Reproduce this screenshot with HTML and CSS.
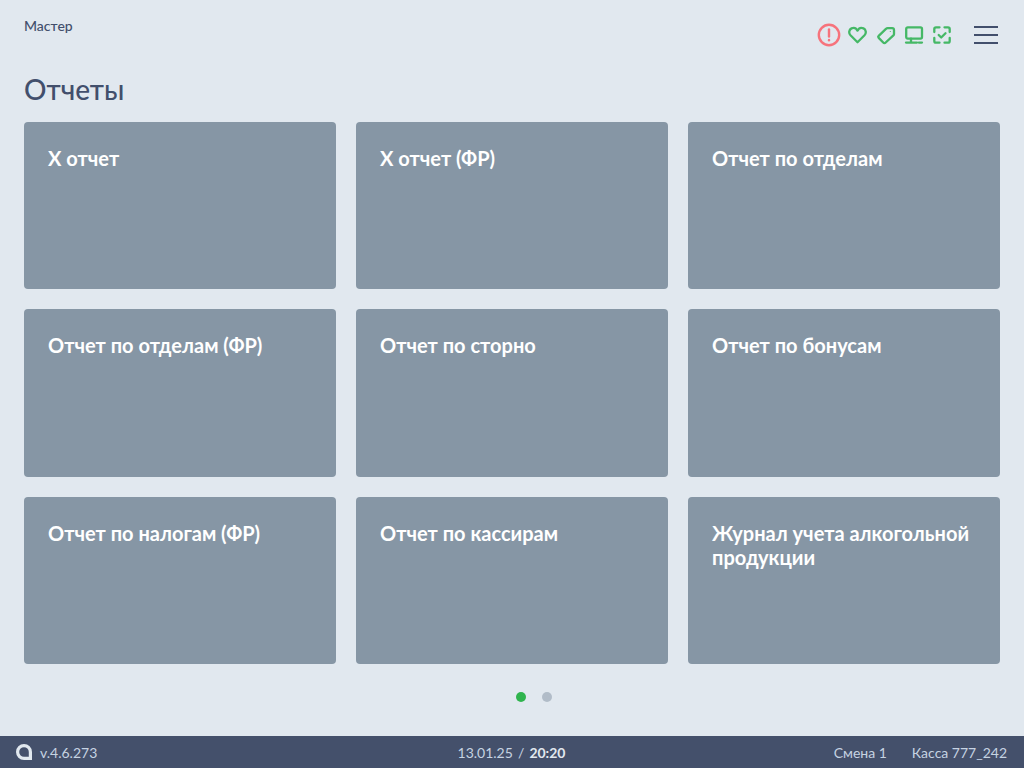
FILE: index.html
```html
<!DOCTYPE html>
<html lang="ru">
<head>
<meta charset="utf-8">
<title>Отчеты</title>
<link rel="stylesheet" href="styles.css">
</head>
<body>
<div class="app">
  <main class="main">
    <header class="top">
      <div class="crumb">Мастер</div>
      <div class="status">
        <svg class="ic ic-alert" viewBox="0 0 24 24"><circle cx="12" cy="12" r="10.200"/><path d="M12 6.500v7"/><path d="M12 17v.3"/></svg>
        <svg class="ic" viewBox="0 0 20 20"><path d="M9.500 17.200 2.500 10.300C.4 8.100 1 4.600 3.500 3.400 5.900 2.300 8.300 3.400 9.500 5.600 10.700 3.400 13.100 2.300 15.500 3.400c2.500 1.200 3.100 4.700 1 6.900z"/></svg>
        <svg class="ic" viewBox="0 0 20 20"><path d="M2.700 10.800 10.200 3.700c.4-.4.900-.6 1.400-.6h4.600c1 0 1.800.8 1.800 1.800V9c0 .5-.2 1-.6 1.400L9.700 17.500c-.7.7-1.800.7-2.500 0l-4.500-4.600c-.6-.6-.6-1.500 0-2.100z"/><path d="M14.300 6.500v.1" class="fine"/></svg>
        <svg class="ic" viewBox="0 0 20 20"><rect x="2.200" y="2.400" width="15.800" height="11.200" rx="1.500"/><path d="M7 13.600v4M2 17.600h11M14.800 17.600H18"/></svg>
        <svg class="ic ic-last" viewBox="0 0 20 20"><path d="M2.300 7V4c0-1 .7-1.700 1.700-1.700h3.500M12.500 2.300H16c1 0 1.700.7 1.700 1.700v3M17.700 13v3c0 1-.7 1.700-1.700 1.700h-3.500M7.500 17.700H4c-1 0-1.700-.7-1.700-1.700v-3"/><path d="m6.700 10 2.500 2.500 4.300-4.300"/></svg>
        <button class="menu" aria-label="Меню"><span></span><span></span><span></span></button>
      </div>
    </header>
    <h1 class="title">Отчеты</h1>
    <section class="grid">
      <a class="card">X отчет</a>
      <a class="card">X отчет (ФР)</a>
      <a class="card">Отчет по отделам</a>
      <a class="card">Отчет по отделам (ФР)</a>
      <a class="card">Отчет по сторно</a>
      <a class="card">Отчет по бонусам</a>
      <a class="card">Отчет по налогам (ФР)</a>
      <a class="card">Отчет по кассирам</a>
      <a class="card">Журнал учета алкогольной продукции</a>
    </section>
    <div class="dots"><i class="dot on"></i><i class="dot"></i></div>
  </main>
  <footer class="foot">
    <div class="foot-l">
      <svg class="logo" viewBox="0 0 16 16"><path d="M16 16H8a8 8 0 1 1 8-8z M12.800 12.800V8A4.800 4.800 0 1 0 8 12.800z" fill-rule="evenodd"/></svg>
      <span>v.4.6.273</span>
    </div>
    <div class="foot-c">13.01.25 <span class="sep">/</span> <b>20:20</b></div>
    <div class="foot-r"><span>Смена 1</span><span>Касса 777_242</span></div>
  </footer>
</div>
</body>
</html>
```
FILE: styles.css
```css
* { box-sizing: border-box; }
html, body { margin: 0; height: 100%; }
body { font-family: Lato, "Noto Sans", sans-serif; background: #e1e8ef; color: #424f6c; }
.app { width: 1024px; height: 768px; display: flex; flex-direction: column; overflow: hidden; }
.main { flex: 1; min-height: 0; padding: 0 24px; display: flex; flex-direction: column; }
.top { height: 71px; display: flex; justify-content: space-between; align-items: flex-start; flex: none; }
.crumb { font-size: 14px; font-weight: 500; line-height: 18px; margin-top: 17px; }
.status { display: flex; align-items: center; gap: 8px; height: 24px; margin-top: 23px; }
.ic { width: 20px; height: 20px; flex: none; fill: none; stroke: #45b866; stroke-width: 2.300; stroke-linecap: round; stroke-linejoin: round; display: block; }
.ic-alert { width: 24px; height: 24px; stroke: #f6737c; stroke-width: 2.400; margin-right: -1px; }
.ic .fine { stroke-width: 1; }
.ic-last { margin-right: 14px; }
.menu { width: 24px; height: 18px; padding: 0; margin: 0 2px 0 0; border: 0; background: none; display: flex; flex-direction: column; justify-content: space-between; }
.menu span { display: block; height: 2px; background: #424f6c; }
.title { margin: 0; font-size: 28px; font-weight: 500; line-height: 36px; height: 51px; flex: none; }
.grid { display: grid; grid-template-columns: repeat(3, 312px); grid-auto-rows: 167.330px; gap: 20px; flex: none; }
.card { background: #8696a5; border-radius: 4px; padding: 24px; color: #fff; font-size: 20px; font-weight: 700; line-height: 24px; }
.dots { display: flex; justify-content: center; gap: 16px; margin-top: 28px; padding-left: 44px; }
.dot { width: 10px; height: 10px; border-radius: 50%; background: #b1bcc8; }
.dot.on { background: #2fb44e; }
.foot { height: 32px; flex: none; background: #44506b; color: #c6d3e2; font-size: 14px; display: grid; grid-template-columns: 1fr auto 1fr; align-items: center; padding: 0 17px 0 16px; }
.foot-l { display: flex; align-items: center; gap: 8px; }
.logo { width: 16px; height: 16px; fill: #e1e8ef; }
.sep { margin: 0 1.500px; }
.foot-c b { font-weight: 700; color: #e1e8ef; }
.foot-r { display: flex; justify-content: flex-end; gap: 25px; }
```
